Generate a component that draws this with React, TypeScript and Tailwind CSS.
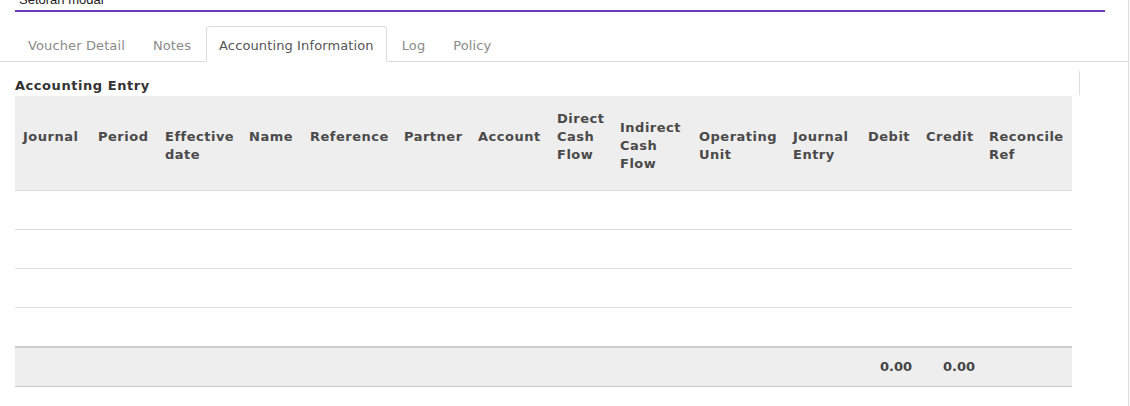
import React from "react";

const cols: { label: string[]; w: number; pt: number }[] = [
  { label: ["Journal"], w: 75, pt: 32 },
  { label: ["Period"], w: 67, pt: 32 },
  { label: ["Effective", "date"], w: 84, pt: 32 },
  { label: ["Name"], w: 61, pt: 32 },
  { label: ["Reference"], w: 94, pt: 32 },
  { label: ["Partner"], w: 74, pt: 32 },
  { label: ["Account"], w: 79, pt: 32 },
  { label: ["Direct", "Cash", "Flow"], w: 63, pt: 14 },
  { label: ["Indirect", "Cash", "Flow"], w: 79, pt: 23 },
  { label: ["Operating", "Unit"], w: 94, pt: 32 },
  { label: ["Journal", "Entry"], w: 75, pt: 32 },
  { label: ["Debit"], w: 58, pt: 32 },
  { label: ["Credit"], w: 63, pt: 32 },
  { label: ["Reconcile", "Ref"], w: 91, pt: 32 },
];

const gridCols =
  "grid grid-cols-[75px_67px_84px_61px_94px_74px_79px_63px_79px_94px_75px_58px_63px_91px]";

const tabs = ["Voucher Detail", "Notes", "Accounting Information", "Log", "Policy"];

export default function App() {
  return (
    <div
      className="w-[1129px] h-[406px] bg-white border-r border-[#dddddd] overflow-hidden"
      style={{ fontFamily: '"DejaVu Sans", Verdana, sans-serif' }}
    >
      {/* top input */}
      <div className="ml-[15px] w-[1090px] h-[12px] border-b-2 border-[#673ab7] overflow-hidden">
        <div
          className="-mt-[7px] pl-[4px] text-[13px] leading-[13px] text-[#222]"
          style={{ fontFamily: '"Liberation Sans", Arial, sans-serif' }}
        >
          Setoran modal
        </div>
      </div>

      {/* tabs */}
      <div className="mt-[14px] flex pl-[15px] border-b border-[#dddddd]">
        {tabs.map((t) => {
          const active = t === "Accounting Information";
          return (
            <div
              key={t}
              className={
                active
                  ? "mr-[2px] -mb-px px-3 pt-[10px] pb-[6px] text-[13px] leading-[18px] tracking-[0.12px] rounded-t-[4px] border border-[#dddddd] border-b-white bg-white text-[#555]"
                  : "mr-[2px] -mb-px px-3 pt-[10px] pb-[6px] text-[13px] leading-[18px] tracking-[0.12px] rounded-t-[4px] border border-transparent text-[#8a8a8a]"
              }
            >
              {t}
            </div>
          );
        })}
      </div>

      {/* content */}
      <div className="ml-[15px] w-[1065px] mt-[9px]">
        <div className="h-[24px] mb-px border-r border-[#dddddd] pt-[6px] text-[13px] leading-[18px] font-bold tracking-[0.55px] text-[#333]">
          Accounting Entry
        </div>

        <div className="w-[1057px]">
          {/* header */}
          <div className={`${gridCols} h-[95px] bg-[#eeeeee] border-b border-[#dddddd]`}>
            {cols.map((c, i) => (
              <div
                key={i}
                className="px-2 text-[13px] leading-[18px] font-bold tracking-[0.5px] text-[#4a4a4a]"
                style={{ paddingTop: c.pt }}
              >
                {c.label.map((l, j) => (
                  <div key={j}>{l}</div>
                ))}
              </div>
            ))}
          </div>

          {/* body rows */}
          <div className="h-[39px] border-b border-[#dddddd]" />
          <div className="h-[39px] border-b border-[#dddddd]" />
          <div className="h-[39px] border-b border-[#dddddd]" />
          <div className="h-[38px]" />

          {/* footer */}
          <div className={`${gridCols} h-[41px] bg-[#eeeeee] border-t-2 border-b border-[#cccccc]`}>
            {cols.map((c, i) => (
              <div
                key={i}
                className="pr-[6px] flex items-center justify-end text-[13px] leading-[18px] font-bold text-[#444]"
              >
                {i === 11 || i === 12 ? "0.00" : ""}
              </div>
            ))}
          </div>
        </div>
      </div>
    </div>
  );
}
